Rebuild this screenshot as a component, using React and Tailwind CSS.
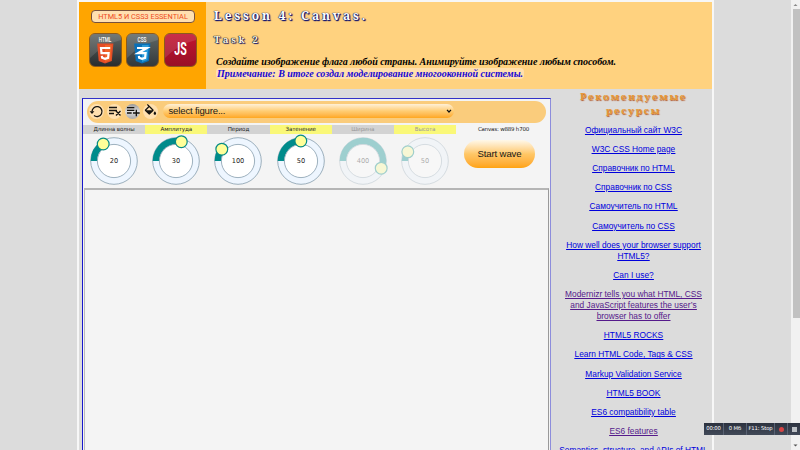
import React from 'react';
import { MdPlaylistAdd, MdFormatColorFill } from 'react-icons/md';

const knobs = [
  { label: 'Длинна волны', value: 20, hx: -10.8, hy: -17, bg: 'bg-[#d3d3d3]' },
  { label: 'Амплитуда', value: 30, hx: 5.3, hy: -19.3, bg: 'bg-[#faf878]' },
  { label: 'Период', value: 100, hx: -16.2, hy: -11.8, bg: 'bg-[#d3d3d3]' },
  { label: 'Затенение', value: 50, hx: -0.2, hy: -20, bg: 'bg-[#faf878]' },
  { label: 'Ширина', value: 400, hx: 18.2, hy: 7.2, bg: 'bg-[#d3d3d3]', off: true },
  { label: 'Высота', value: 50, hx: -17.2, hy: -9.2, bg: 'bg-[#faf878]', off: true },
];

function Knob({ value, hx, hy, off }) {
  const len = Math.hypot(hx, hy);
  const ux = hx / len;
  const uy = hy / len;
  const large = hy > 0 ? 1 : 0;
  const arc = `M-23.3 0 A23.3 23.3 0 ${large} 1 ${ux * 23.3} ${uy * 23.3} L${ux * 16.8} ${uy * 16.8} A16.8 16.8 0 ${large} 0 -16.8 0 Z`;
  return (
    <svg viewBox="-31 -27 62 54" className={`h-[54px] w-[62px] ${off ? 'opacity-35' : ''}`}>
      <circle r="23.3" fill="#eef6ff" stroke="#7790a2" strokeWidth="0.7" />
      <path d={arc} fill="#008b8b" />
      <circle r="16.6" fill="#fff" stroke="#7790a2" strokeWidth="0.7" />
      <circle cx={hx} cy={hy} r="5.9" fill="#ffff99" stroke="#078b83" strokeWidth="1.2" />
      <text y="2.4" textAnchor="middle" fontSize="6.6" fill="#222" fontFamily="DejaVu Sans, sans-serif">{value}</text>
    </svg>
  );
}

function Badge({ title, tone, children }) {
  return (
    <div className={`flex h-[34px] w-[33px] flex-col items-center rounded-[6px] border border-[#8b5a1c] ${tone}`}>
      <svg viewBox="0 0 31 32" className="h-8 w-[31px]">
        <path d="M0 4Q0 0 4 0H27Q31 0 31 4V6Q14 10 0 24Z" fill="#fff" opacity=".12" />
        {title && (
          <text x="15" y="8" textAnchor="middle" fontSize="7.5" fontWeight="500" textLength={title === 'HTML' ? 12.5 : 9} lengthAdjust="spacingAndGlyphs" fill="#fff" fontFamily="Roboto, sans-serif">{title}</text>
        )}
        {children}
      </svg>
    </div>
  );
}

const links = [
  ['Официальный сайт W3C'],
  ['W3C CSS Home page'],
  ['Справочник по HTML'],
  ['Справочник по CSS'],
  ['Самоучитель по HTML'],
  ['Самоучитель по CSS'],
  ['How well does your browser support', 'HTML5?'],
  ['Can I use?'],
  ['Modernizr tells you what HTML, CSS', 'and JavaScript features the user’s', 'browser has to offer'],
  ['HTML5 ROCKS'],
  ['Learn HTML Code, Tags & CSS'],
  ['Markup Validation Service'],
  ['HTML5 BOOK'],
  ['ES6 compatibility table'],
  ['ES6 features'],
  ['Semantics, structure, and APIs of HTML'],
];
const visited = [8, 14];

function Header() {
  return (
    <header className="flex h-[87px] bg-[#ffd27f]">
      <div className="w-[127px] bg-[#ffa500] pt-2">
        <div className="ml-3 flex h-[13px] w-[104px] items-center justify-center rounded-[4px] border border-[#77513c] bg-[#ffe0b0] font-['Roboto'] text-[7.35px] whitespace-nowrap text-[#ee4b20]">
          HTML5 И CSS3 ESSENTIAL
        </div>
        <div className="mt-[10px] ml-[9.5px] flex gap-[4.5px]">
          <Badge title="HTML" tone="bg-linear-to-b from-[#616765] to-[#292d2e]">
            <path d="M7.2 9.5H23.4L21.8 27L15 29.5L8.7 27Z" fill="#e44d26" />
            <path d="M15 11H21.7L20.4 26L15 28Z" fill="#f16529" />
            <path d="M20.2 14H11L11.5 19.2H18.6L18.1 23.8L15 24.8L12.1 23.8L11.9 21.8" fill="none" stroke="#fff" strokeWidth="2.2" />
          </Badge>
          <Badge title="CSS" tone="bg-linear-to-b from-[#616967] to-[#34393b]">
            <path d="M7.2 9.5H23.4L21.8 27L15 29.5L8.7 27Z" fill="#0870b8" />
            <path d="M15 11H21.7L20.4 26L15 28Z" fill="#2a9bd8" />
            <path d="M10 14H19.8L11 19.2H18.6L18.1 23.8L15 24.8L12.1 23.8L11.9 21.8" fill="none" stroke="#fff" strokeWidth="2.2" />
          </Badge>
          <Badge tone="bg-linear-to-b from-[#c3122f] to-[#981027]">
            <text x="9.3" y="21" fontSize="17.5" textLength="12.5" lengthAdjust="spacingAndGlyphs" fill="#fff" fontWeight="700" fontFamily="Roboto, sans-serif">JS</text>
          </Badge>
        </div>
      </div>
      <div className="flex flex-1 flex-col items-start pl-2 font-['Noto_Serif','DejaVu_Serif',serif] font-bold whitespace-nowrap">
        <h1 className="mt-[5px] h-[18px] text-[12px] leading-[18px] tracking-[2.87px] text-white [text-shadow:1px_1px_1px_#191970,1px_1px_1px_#191970,-0.5px_-0.5px_1px_#333,0_0_1px_#191970]">Lesson 4: Canvas.</h1>
        <h2 className="mt-2 h-[14px] text-[9.6px] leading-[14px] tracking-[2.7px] text-[#fff7df] [text-shadow:1px_1px_1px_#191970,-0.5px_-0.5px_1px_#222,0_0_1px_#111,0_0_1px_#111]">Task 2</h2>
        <p className="mt-[9px] ml-0.5 h-3 font-['Liberation_Serif',serif] text-[10px] leading-3 tracking-[-0.03px] text-black italic">Создайте изображение флага любой страны. Анимируйте изображение любым способом.</p>
        <p className="ml-0.5 h-[11px] rounded-sm bg-[#ffe0af] px-[1px] font-['Liberation_Serif',serif] text-[10px] leading-[11px] text-[#1707d5] italic">Примечание: В итоге создал моделирование многооконной системы.</p>
      </div>
    </header>
  );
}

function Tool({ children, active }) {
  return (
    <div className={`flex size-[15px] items-center justify-center rounded-full text-[#15130f] ${active ? 'bg-linear-to-b from-[#999] via-[#ddd] to-[#aaa]' : 'bg-[#ffe0af]'}`}>
      {children}
    </div>
  );
}

function Editor() {
  return (
    <section className="mt-[9px] ml-[3px] flex h-[370px] w-[469px] flex-col border border-t-[#3333c8] border-r-[#8d8ddc] border-b-[#3333c8] border-l-[#1717cc] bg-[#f4f4f4]">
      <div className="mt-0.5 ml-1 flex h-[22px] w-[459px] shrink-0 items-center rounded-full bg-[#facc7c] pb-0.5 pl-[2px]">
        <div className="flex w-[74px] gap-[3px]">
          <Tool>
            <svg viewBox="0 0 15 15" className="size-[15px]" fill="none" stroke="currentColor" strokeWidth="1.3">
              <path d="M3 7.5A5 5 0 1 1 5 11.6" />
              <path d="M.6 7.2H5.4L3 10Z" fill="currentColor" stroke="none" />
            </svg>
          </Tool>
          <Tool>
            <svg viewBox="0 0 14 14" className="size-3.5" fill="none" stroke="currentColor" strokeWidth="1.4"><path d="M1 3.5H9M1 6.5H9M1 9.5H6M8 7L12.5 11.5M12.5 7L8 11.5" /></svg>
          </Tool>
          <Tool active><MdPlaylistAdd className="size-[16px] shrink-0" /></Tool>
          <Tool><MdFormatColorFill className="size-[15px] [clip-path:inset(0_0_18%_0)]" /></Tool>
        </div>
        <div className="flex h-[14px] w-[291px] items-center justify-between rounded-full bg-linear-to-b from-[#fff0d6] via-[#ffcd73] to-[#ffa71a] pr-[2px] pl-[5.5px] font-['Liberation_Sans',sans-serif] text-[9.6px] tracking-[-0.18px] text-[#242015]">
          <span className="pt-px">select figure...</span>
          <svg viewBox="0 0 6 4" className="h-1 w-1.5 overflow-visible" fill="none" stroke="#111" strokeWidth="1.2"><path d="M1 .8L3 3L5 .8" /></svg>
        </div>
      </div>
      <div className="mt-0.5 flex h-[63px] shrink-0">
        <div className="flex w-[374px]">
          {knobs.map((k) => (
            <div key={k.label} className="flex w-[62.2px] shrink-0 flex-col">
              <div className={`flex h-[9px] items-center justify-center font-['DejaVu_Sans',sans-serif] text-[5.6px] tracking-[-0.12px] whitespace-nowrap ${k.bg} ${k.off ? 'text-[#999]' : 'text-[#222]'}`}>{k.label}</div>
              <Knob {...k} />
            </div>
          ))}
        </div>
        <div className="ml-[7px] flex w-[71px] flex-col items-center">
          <span className="ml-[8px] h-[9px] font-['DejaVu_Sans',sans-serif] text-[5.5px] leading-[9px] tracking-[-0.2px] whitespace-nowrap text-[#222]">Canvas: w889 h700</span>
          <button className="mt-[6px] h-7 w-[71px] rounded-full bg-linear-to-b from-[#fff8e9] via-[#ffc766] to-[#ffa30b] font-['Liberation_Sans',sans-serif] text-[9.6px] tracking-[-0.15px] whitespace-nowrap text-[#171717]">Start wave</button>
        </div>
      </div>
      <div className="mx-px flex-1 border border-t-2 border-t-[#b5b5b5] border-r-[#999] border-l-[#bbb]" />
    </section>
  );
}

function Sidebar() {
  return (
    <aside className="flex-1 pt-px pl-[4px] text-center">
      <h3 className="h-[27px] font-['Noto_Serif','DejaVu_Serif',serif] text-[9.8px] leading-[13.5px] font-bold tracking-[1.75px] whitespace-nowrap text-[#e89a38] [text-shadow:0.5px_0.5px_1px_#b45b2c]">Рекомендуемые<br />ресурсы</h3>
      <nav className="mt-[7.6px] flex flex-col gap-[8.3px] font-['Liberation_Sans',sans-serif] text-[8.35px] leading-[10.9px]">
        {links.map((l, i) => (
          <a key={i} className={`whitespace-nowrap underline ${visited.includes(i) ? 'text-[#551a8b]' : 'text-[#0000dc]'}`}>
            {l.map((line) => <span key={line} className="block underline">{line}</span>)}
          </a>
        ))}
      </nav>
    </aside>
  );
}

export default function App() {
  return (
    <div className="relative flex h-[450px] w-[800px] overflow-hidden bg-[#dcdcdc]">
      <main className="ml-[77px] h-[460px] w-[637px] shrink-0 border-2 border-[#f7f7f7] bg-[#dcdcdc]">
        <Header />
        <div className="flex">
          <Editor />
          <Sidebar />
        </div>
      </main>
      <div className="ml-auto flex h-full w-[9px] flex-col items-center justify-between bg-[#f1f1f1]">
        <svg viewBox="0 0 9 9" className="size-[9px]"><path d="M2.5 6L4.5 4L6.5 6Z" fill="#888" /></svg>
        <div className="mb-auto ml-px h-[309px] w-[7px] bg-[#c1c1c1]" />
        <svg viewBox="0 0 9 9" className="size-[9px]"><path d="M2.5 3.5H6.5L4.5 5.5Z" fill="#555" /></svg>
      </div>
      <div className="absolute top-[423px] left-[704px] flex h-3 w-24 items-center bg-linear-to-b from-[#2c323f] to-[#414958] font-['DejaVu_Sans',sans-serif] text-[5.3px] tracking-[-0.12px] text-white">
        <span className="flex h-full w-[20px] items-center justify-center border-r border-[#596273]">00:00</span>
        <span className="flex h-full w-[23px] items-center justify-center border-r border-[#596273]">0 Мб</span>
        <span className="flex h-full w-[28px] items-center justify-center border-r border-[#596273] whitespace-nowrap">F11: Stop</span>
        <span className="flex h-full w-[13px] items-center justify-center border-r border-[#596273]"><i className="size-[5px] rounded-full bg-[#d64444]" /></span>
        <span className="flex flex-1 items-center justify-center"><i className="size-[5px] bg-[#bcc0c5]" /></span>
      </div>
    </div>
  );
}
